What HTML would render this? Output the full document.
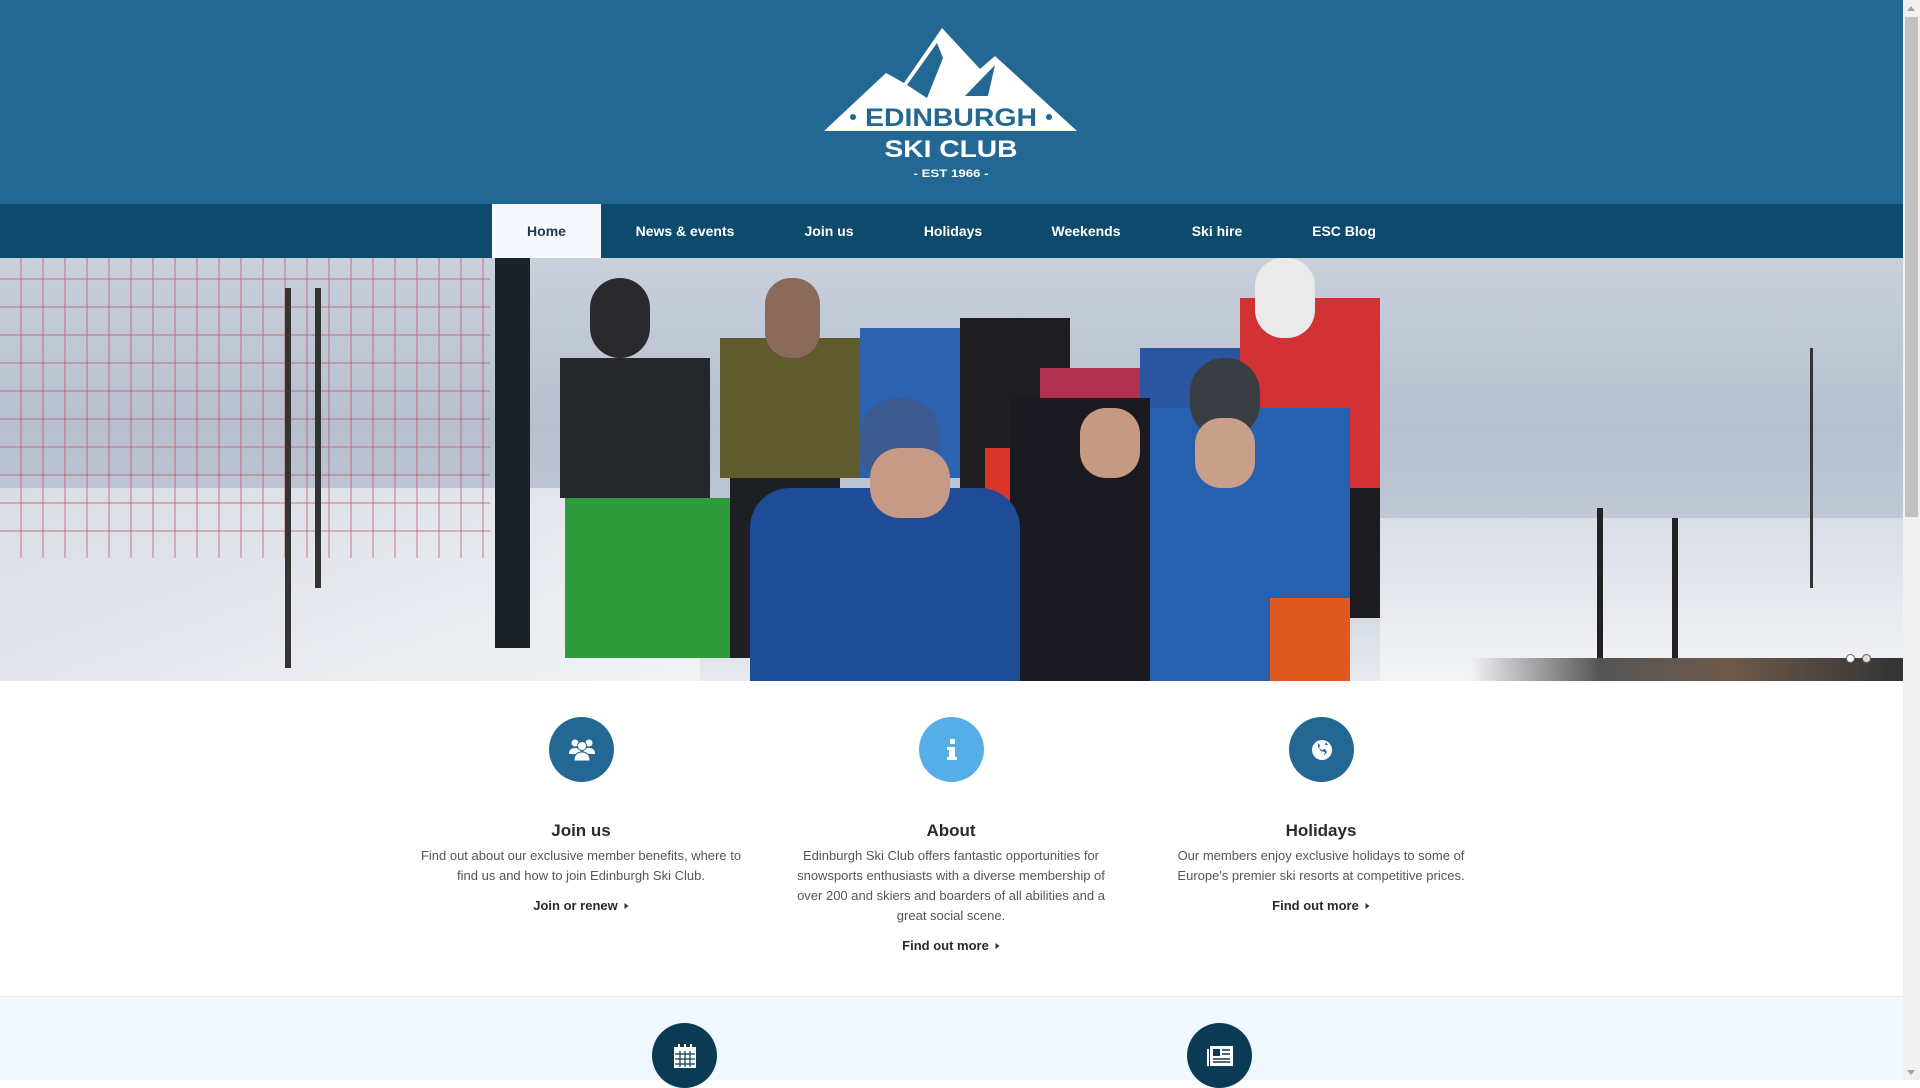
<!DOCTYPE html>
<html><head><meta charset="utf-8"><style>
*{margin:0;padding:0;box-sizing:border-box}
body{width:1920px;height:1080px;overflow:hidden;font-family:"Liberation Sans",Arial,sans-serif;background:#fff;position:relative}
.abs{position:absolute}
#hdr{left:0;top:0;width:1903px;height:204px;background:#226892}
#nav{left:0;top:204px;width:1903px;height:54px;background:#0e4a6c}
.ni{position:absolute;top:0;height:54px;line-height:54px;color:#fff;font-weight:bold;font-size:14px;text-align:center;transform:translateX(-50%)}
#home{left:492px;top:204px;width:109px;height:54px;background:#f5f9fd;color:#2a3a48;font-weight:bold;font-size:14px;line-height:54px;text-align:center}
#hero{left:0;top:258px;width:1903px;height:423px;overflow:hidden;background:linear-gradient(#c9d0dc 0%,#b7bfcf 40%,#c3cad8 70%,#e8ebf0 100%)}
.b{position:absolute}
.col{position:absolute;top:820px;width:325px;text-align:center;transform:translateX(-50%)}
.col h3{font-size:17px;color:#2b2b2b;line-height:22px;margin-bottom:4px}
.col p{font-size:13px;color:#555;line-height:20px}
.col a{display:block;margin-top:12px;font-size:13px;font-weight:bold;color:#2b2b2b;text-decoration:none}
.col a:after{content:"";display:inline-block;margin-left:7px;border-left:4px solid #333;border-top:3.5px solid transparent;border-bottom:3.5px solid transparent;vertical-align:1px}
.circ{position:absolute;width:65px;height:65px;border-radius:50%;display:flex;align-items:center;justify-content:center}
#sb{left:1903px;top:0;width:17px;height:1080px;background:#f1f1f1}
</style></head><body>
<div id="hdr" class="abs">
<svg class="abs" style="left:0;top:0" width="1903" height="204" viewBox="0 0 1903 204">
<polygon points="824,131 886,73 904,83 942,28 980,69 995,56 1077,131" fill="#fff"/>
<polygon points="937,43 943,58 927,98 907,85" fill="#226892"/>
<polygon points="995,65 965,96 988,96" fill="#226892"/>
<text x="951" y="126" text-anchor="middle" font-family="Liberation Sans" font-size="25" font-weight="bold" fill="#226892" textLength="172" lengthAdjust="spacingAndGlyphs">EDINBURGH</text>
<circle cx="853" cy="117" r="3" fill="#226892"/><circle cx="1049" cy="117" r="3" fill="#226892"/>
<text x="951" y="157" text-anchor="middle" font-family="Liberation Sans" font-size="24" font-weight="bold" fill="#fff" textLength="133" lengthAdjust="spacingAndGlyphs">SKI CLUB</text>
<text x="951" y="177" text-anchor="middle" font-family="Liberation Sans" font-size="11" font-weight="bold" fill="#fff" textLength="75" lengthAdjust="spacingAndGlyphs">- EST 1966 -</text>
</svg>
</div>
<div id="nav" class="abs">
<div class="ni" style="left:685px">News &amp; events</div>
<div class="ni" style="left:829px">Join us</div>
<div class="ni" style="left:953px">Holidays</div>
<div class="ni" style="left:1086px">Weekends</div>
<div class="ni" style="left:1217px">Ski hire</div>
<div class="ni" style="left:1344px">ESC Blog</div>
</div>
<div id="home" class="abs">Home</div>
<div id="hero" class="abs">
<div class="b" style="left:0;top:230px;width:700px;height:200px;background:linear-gradient(160deg,#d8dce4,#f2f3f6)"></div>
<div class="b" style="left:1380px;top:260px;width:523px;height:170px;background:linear-gradient(#d9dde5,#f4f5f8)"></div>
<div class="b" style="left:0;top:0;width:490px;height:300px;background:repeating-linear-gradient(90deg,transparent 0 20px,rgba(190,70,90,.35) 20px 22px),repeating-linear-gradient(0deg,transparent 0 26px,rgba(190,70,90,.35) 26px 28px)"></div>
<div class="b" style="left:495px;top:0;width:35px;height:390px;background:#1c2328"></div>
<div class="b" style="left:285px;top:30px;width:6px;height:380px;background:#333"></div>
<div class="b" style="left:315px;top:30px;width:6px;height:300px;background:#333"></div>
<div class="b" style="left:560px;top:100px;width:150px;height:140px;background:#24282b"></div>
<div class="b" style="left:565px;top:240px;width:170px;height:160px;background:#2e9c3c"></div>
<div class="b" style="left:590px;top:20px;width:60px;height:80px;border-radius:30px;background:#2a2a2e"></div>
<div class="b" style="left:720px;top:80px;width:150px;height:140px;background:#5f5b2e"></div>
<div class="b" style="left:730px;top:220px;width:110px;height:180px;background:#1e1f23"></div>
<div class="b" style="left:765px;top:20px;width:55px;height:80px;border-radius:26px;background:#8a6a58"></div>
<div class="b" style="left:860px;top:70px;width:140px;height:150px;background:#2b63b0"></div>
<div class="b" style="left:960px;top:60px;width:110px;height:200px;background:#1d1d22"></div>
<div class="b" style="left:985px;top:190px;width:40px;height:90px;background:#d9352a"></div>
<div class="b" style="left:1040px;top:110px;width:100px;height:90px;background:#b03050"></div>
<div class="b" style="left:1140px;top:90px;width:120px;height:140px;background:#2a55a0"></div>
<div class="b" style="left:1240px;top:40px;width:140px;height:200px;background:#d23234"></div>
<div class="b" style="left:1350px;top:230px;width:30px;height:130px;background:#1c1c20"></div>
<div class="b" style="left:1255px;top:0;width:60px;height:80px;border-radius:28px;background:#eaeaea"></div>
<div class="b" style="left:1010px;top:140px;width:140px;height:283px;background:#1b1a20"></div>
<div class="b" style="left:1150px;top:150px;width:200px;height:273px;background:#2860b0"></div>
<div class="b" style="left:1270px;top:340px;width:80px;height:83px;background:#e05a20"></div>
<div class="b" style="left:1190px;top:100px;width:70px;height:80px;border-radius:34px;background:#3a3d42"></div>
<div class="b" style="left:860px;top:140px;width:80px;height:90px;border-radius:38px;background:#3c5a90"></div>
<div class="b" style="left:750px;top:230px;width:270px;height:193px;border-radius:40px 40px 0 0;background:#1e4c96"></div>
<div class="b" style="left:870px;top:190px;width:80px;height:70px;border-radius:30px;background:#c59a86"></div>
<div class="b" style="left:1080px;top:150px;width:60px;height:70px;border-radius:26px;background:#c69a82"></div>
<div class="b" style="left:1195px;top:160px;width:60px;height:70px;border-radius:26px;background:#c8a08a"></div>
<div class="b" style="left:1597px;top:250px;width:6px;height:160px;background:#222"></div>
<div class="b" style="left:1672px;top:260px;width:6px;height:160px;background:#222"></div>
<div class="b" style="left:1810px;top:90px;width:3px;height:240px;background:#333"></div>
<div class="b" style="left:1470px;top:400px;width:433px;height:23px;background:linear-gradient(90deg,transparent,#555 30%,#6d5a4a 60%,#333)"></div>
<div class="b" style="left:1846px;top:396px;width:9px;height:9px;border-radius:50%;background:#fff;border:1px solid #666"></div>
<div class="b" style="left:1862px;top:396px;width:9px;height:9px;border-radius:50%;background:#ddd;border:1px solid #666"></div>
</div>
<div class="circ" style="left:549px;top:717px;background:#226892">
<svg width="28" height="24" viewBox="0 0 28 24" fill="#fff"><circle cx="7" cy="5" r="3.5"/><circle cx="21" cy="5" r="3.5"/><path d="M1 16q0-6 6-6t6 6z"/><path d="M15 16q0-6 6-6t6 6z"/><circle cx="14" cy="8" r="4.5" stroke="#226892" stroke-width="1"/><path d="M6 23q0-9 8-9t8 9z" stroke="#226892" stroke-width="1"/></svg></div>
<div class="circ" style="left:919px;top:717px;background:#55aee6"><svg width="12" height="22" viewBox="0 0 12 22" fill="#fff"><rect x="4" y="0" width="5" height="5"/><path d="M1 8h8v10h2v3H1v-3h2v-7H1z"/></svg></div>
<div class="circ" style="left:1289px;top:717px;background:#226892"><svg width="22" height="22" viewBox="0 0 22 22"><circle cx="11" cy="11" r="10" fill="#fff"/><path d="M7 4q3 2 1 5l3 2 3-1 2 3-3 4 1-4-4-1-3-4z M15 3l2 3-3 0z" fill="#226892"/></svg></div>
<div class="col" style="left:581px"><h3>Join us</h3><p>Find out about our exclusive member benefits, where to find us and how to join Edinburgh Ski Club.</p><a>Join or renew</a></div>
<div class="col" style="left:951px;width:315px"><h3>About</h3><p>Edinburgh Ski Club offers fantastic opportunities for snowsports enthusiasts with a diverse membership of over 200 and skiers and boarders of all abilities and a great social scene.</p><a>Find out more</a></div>
<div class="col" style="left:1321px"><h3>Holidays</h3><p>Our members enjoy exclusive holidays to some of Europe's premier ski resorts at competitive prices.</p><a>Find out more</a></div>
<div class="abs" style="left:0;top:996px;width:1903px;height:84px;background:#f0f7fd;border-top:1px solid #e4edf4"></div>
<div class="circ" style="left:652px;top:1023px;background:#0b3a55"><svg width="24" height="26" viewBox="0 0 24 26" fill="none" stroke="#fff" stroke-width="2"><rect x="2" y="5" width="20" height="19" fill="#fff"/><path d="M6 1v6M12 1v6M18 1v6" /><g stroke="#0b3a55" stroke-width="1.2"><path d="M2 11h20M2 16h20M2 21h20M7 8v16M12 8v16M17 8v16"/></g></svg></div>
<div class="circ" style="left:1187px;top:1023px;background:#0b3a55"><svg width="28" height="22" viewBox="0 0 28 22"><rect x="4" y="1" width="23" height="20" fill="#fff"/><rect x="1" y="4" width="2" height="17" fill="#fff"/><rect x="7" y="4" width="7" height="7" fill="#0b3a55"/><path d="M16 5h8M16 9h8M7 14h17M7 17h17" stroke="#0b3a55" stroke-width="1.5"/></svg></div>
<div id="sb" class="abs"><div style="position:absolute;left:4px;top:6px;border-left:4px solid transparent;border-right:4px solid transparent;border-bottom:5px solid #a3a3a3"></div><div style="position:absolute;left:2px;top:17px;width:13px;height:500px;background:#c1c1c1"></div><div style="position:absolute;left:4px;top:1070px;border-left:4px solid transparent;border-right:4px solid transparent;border-top:5px solid #a3a3a3"></div></div>
</body></html>
